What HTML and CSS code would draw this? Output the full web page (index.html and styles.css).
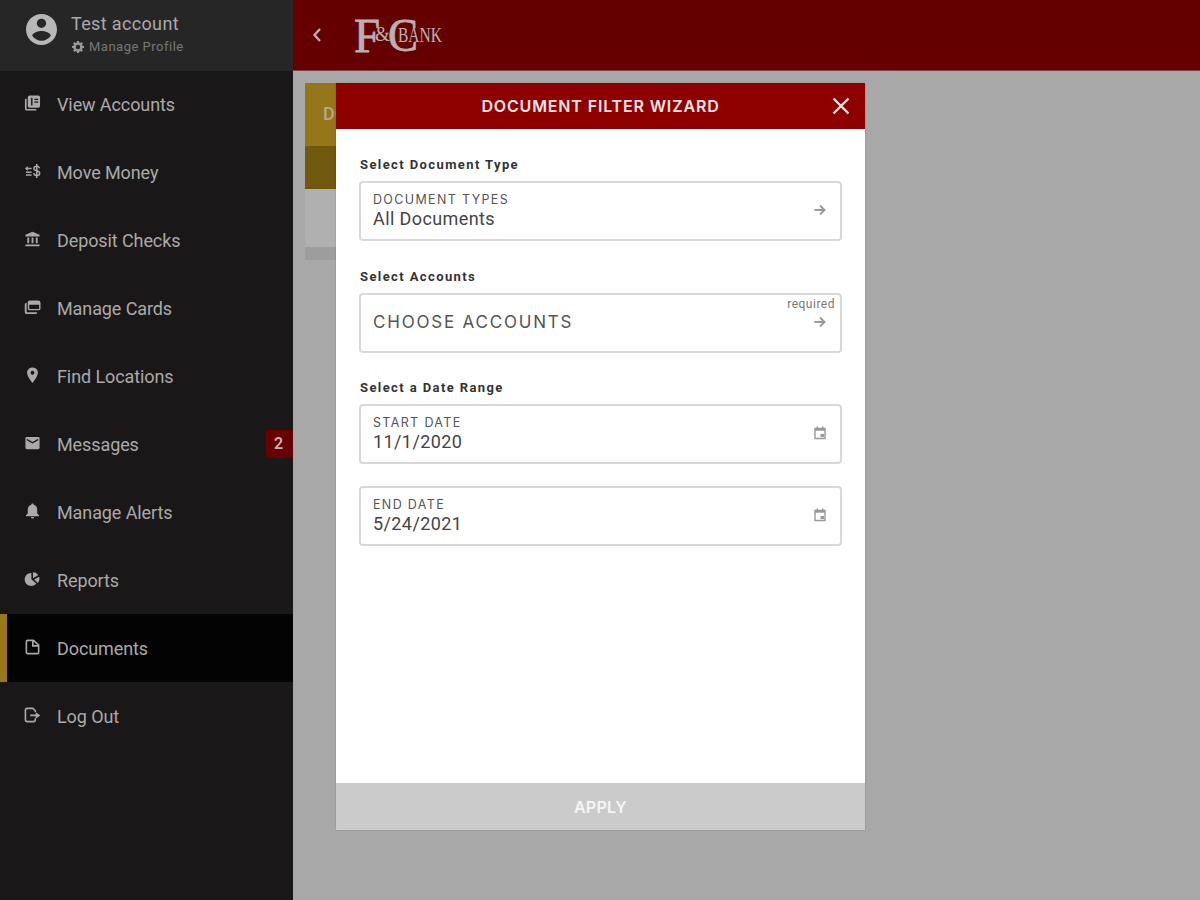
FILE: index.html
```html
<!DOCTYPE html>
<html lang="en">
<head>
    <meta charset="UTF-8">
    <meta name="viewport" content="width=device-width, initial-scale=1.0">
    <title>F&amp;C Bank - Documents</title>
    <link rel="stylesheet" href="styles.css">
</head>
<body>
    <div class="sidebar">
        <div class="profile">
            <svg class="avatar" viewBox="2 2 20 20"><path d="M12 2C6.48 2 2 6.48 2 12s4.48 10 10 10 10-4.48 10-10S17.52 2 12 2zm0 3c1.66 0 3 1.34 3 3s-1.34 3-3 3-3-1.34-3-3 1.34-3 3-3zm0 14.2c-2.5 0-4.71-1.28-6-3.22.03-1.99 4-3.08 6-3.08 1.99 0 5.97 1.09 6 3.08-1.29 1.94-3.5 3.22-6 3.22z"/></svg>
            <div class="profile-text">
                <div class="profile-name">Test account</div>
                <a class="profile-link" href="#">
                    <svg class="gear" viewBox="0 0 12 12"><circle cx="6" cy="6" r="3.5" fill="none" stroke="currentColor" stroke-width="2.6"/><path d="M5 0h2v2H5zM5 10h2v2H5zM0 5h2v2H0zM10 5h2v2h-2zM1.1 2.5l1.4-1.4 1.3 1.3-1.4 1.4zM8.2 2.4l1.3-1.3 1.4 1.4-1.3 1.3zM1.1 9.5l1.3-1.3 1.4 1.4-1.3 1.3zM8.2 9.6l1.4-1.4 1.3 1.3-1.4 1.4z"/></svg>
                    <span>Manage Profile</span>
                </a>
            </div>
        </div>
        <nav class="menu">
            <a class="menu-item" href="#">
                <svg class="icon" viewBox="0 0 18 18"><path fill-rule="evenodd" d="M6 .5h9q2 0 2 2v9q0 2-2 2H6q-2 0-2-2v-9q0-2 2-2zM7.500 3v8H9V3zM11 4v1.300h4V4zM11 7v1.300h4V7z"/><path d="M1 4h1.800v10.800H13v1.700H3q-2 0-2-2z"/></svg>
                <span class="menu-label">View Accounts</span>
            </a>
            <a class="menu-item" href="#">
                <svg class="icon" viewBox="0 0 18 18"><path d="M1 5.800l3-2.600V5h4v1.600H4v1.800zM2 9h6v1.500H2zM2 12h6v1.400H2z"/><path d="M16.500 5.600C16 4 15 3.500 13.500 3.500c-1.800 0-3 .8-3 2.300 0 3.400 6.100 1.500 6.100 5 0 1.500-1.200 2.400-3.100 2.400-1.800 0-3-.8-3.200-2.500M13.500 1v15" fill="none" stroke="currentColor" stroke-width="1.600"/></svg>
                <span class="menu-label">Move Money</span>
            </a>
            <a class="menu-item" href="#">
                <svg class="icon" viewBox="0 0 18 18"><path d="M9 .8L16.500 4v1.800h-15V4zM3.500 7h2v6h-2zM8 7h2v6H8zM12.500 7h2v6h-2zM1.500 14.300h15v1.900h-15z"/></svg>
                <span class="menu-label">Deposit Checks</span>
            </a>
            <a class="menu-item" href="#">
                <svg class="icon" viewBox="0 0 18 18"><path fill-rule="evenodd" d="M6 1.500h9q2.500 0 2.500 2.500v6q0 2-2 2H6q-2 0-2-2V3.500q0-2 2-2zM5.500 6v4.500H16V6z"/><path d="M.8 6q0-2 2-2v10H14q0 2-2 2H2.800q-2 0-2-2z"/></svg>
                <span class="menu-label">Manage Cards</span>
            </a>
            <a class="menu-item" href="#">
                <svg class="icon" viewBox="0 0 18 18"><path fill-rule="evenodd" d="M9 .5c3.300 0 5.700 2.300 5.700 5.500C14.700 10 9 17 9 17S3.300 10 3.300 6C3.300 2.800 5.700.5 9 .5zm0 3.600a2 2 0 100 4 2 2 0 000-4z"/></svg>
                <span class="menu-label">Find Locations</span>
            </a>
            <a class="menu-item" href="#">
                <svg class="icon" viewBox="0 0 18 18"><path fill-rule="evenodd" d="M3 2h12q1.500 0 1.500 1.500v10Q16.500 15 15 15H3q-1.500 0-1.500-1.500v-10Q1.500 2 3 2zm0 2v1.600L9 9l6-3.400V4L9 7.400z"/></svg>
                <span class="menu-label">Messages</span>
                <span class="badge">2</span>
            </a>
            <a class="menu-item" href="#">
                <svg class="icon" viewBox="0 0 18 18"><path d="M9 .5c.8 0 1.300.5 1.300 1.300C12.700 2.500 14 4.300 14 7v4l1.900 2v1H2.100v-1L4 11V7c0-2.700 1.300-4.500 3.700-5.200C7.700 1 8.200.5 9 .5zM7.300 14.800h3.400a1.700 1.700 0 01-3.400 0z"/></svg>
                <span class="menu-label">Manage Alerts</span>
            </a>
            <a class="menu-item" href="#">
                <svg class="icon" viewBox="0 0 18 18"><path d="M7.800 2v6.700l5.200 4.500A6.900 6.900 0 117.800 2zM9.500 1.200c2.500 0 4.400 1.200 5.400 3.200L9.500 7.600zM16 6c.8 2.600.2 5-1.500 6.700L10.800 9z"/></svg>
                <span class="menu-label">Reports</span>
            </a>
            <a class="menu-item active" href="#">
                <svg class="icon" viewBox="0 0 18 18"><path d="M4 1.500h6l5.500 5V14q0 1.500-1.500 1.500H4q-1.500 0-1.500-1.500V3q0-1.500 1.500-1.500zM9.300 2v5.300h6" fill="none" stroke="currentColor" stroke-width="1.700"/></svg>
                <span class="menu-label">Documents</span>
            </a>
            <a class="menu-item" href="#">
                <svg class="icon" viewBox="0 0 18 18"><path d="M12 5.300V4L9.500 1.500h-6Q1.500 1.500 1.500 3.500v10q0 2 2 2h7q1.500 0 1.500-1.700V12M6.500 8.900h8" fill="none" stroke="currentColor" stroke-width="1.700"/><path d="M12.300 5.300l5 3.600-5 3.600z"/></svg>
                <span class="menu-label">Log Out</span>
            </a>
        </nav>
    </div>

    <div class="main">
        <div class="topbar">
            <svg class="back" viewBox="0 0 10 14"><path d="M8 1L2.500 7 8 13" fill="none" stroke="currentColor" stroke-width="2.400"/></svg>
            <svg class="logo" viewBox="-4 -14 100 68">
                <text class="logo-big" x="0" y="36.500" font-size="48" textLength="26" lengthAdjust="spacingAndGlyphs">F</text>
                <text x="21" y="26" font-size="20" textLength="15" lengthAdjust="spacingAndGlyphs">&amp;</text>
                <text class="logo-big" x="34" y="36" font-size="46" textLength="30" lengthAdjust="spacingAndGlyphs">C</text>
                <text x="44" y="27" font-size="20" textLength="44" lengthAdjust="spacingAndGlyphs">BANK</text>
            </svg>
        </div>
        <div class="content">
            <div class="panel">
                <div class="panel-title">DOCUMENTS</div>
                <div class="panel-bar"></div>
                <div class="panel-body"></div>
                <div class="panel-footer"></div>
            </div>
        </div>
    </div>

    <div class="modal">
        <div class="modal-header">
            <span class="modal-title">DOCUMENT FILTER WIZARD</span>
            <svg class="close" viewBox="0 0 18 18"><path d="M1.500 1.500l15 15M16.500 1.500l-15 15" fill="none" stroke="currentColor" stroke-width="2.300"/></svg>
        </div>
        <div class="modal-body">
            <h3>Select Document Type</h3>
            <div class="field">
                <div class="field-text">
                    <div class="field-label">DOCUMENT TYPES</div>
                    <div class="field-value">All Documents</div>
                </div>
                <svg class="field-icon" viewBox="0 0 14 14"><path d="M1.500 7h10M7 2.500L11.500 7 7 11.500" fill="none" stroke="currentColor" stroke-width="1.900"/></svg>
            </div>
            <h3>Select Accounts</h3>
            <div class="field">
                <div class="placeholder">CHOOSE ACCOUNTS</div>
                <span class="required">required</span>
                <svg class="field-icon" viewBox="0 0 14 14"><path d="M1.500 7h10M7 2.500L11.500 7 7 11.500" fill="none" stroke="currentColor" stroke-width="1.900"/></svg>
            </div>
            <h3>Select a Date Range</h3>
            <div class="field">
                <div class="field-text">
                    <div class="field-label">START DATE</div>
                    <div class="field-value date">11/1/2020</div>
                </div>
                <svg class="field-icon" viewBox="0 0 14 14"><path d="M2 2.500h10v10H2zM2 4h10" fill="none" stroke="currentColor" stroke-width="1.400"/><path d="M3.500.5H5V3H3.500zM9 .5h1.500V3H9zM7.500 8H11v3H7.500z"/></svg>
            </div>
            <div class="field">
                <div class="field-text">
                    <div class="field-label">END DATE</div>
                    <div class="field-value date">5/24/2021</div>
                </div>
                <svg class="field-icon" viewBox="0 0 14 14"><path d="M2 2.500h10v10H2zM2 4h10" fill="none" stroke="currentColor" stroke-width="1.400"/><path d="M3.500.5H5V3H3.500zM9 .5h1.500V3H9zM7.500 8H11v3H7.500z"/></svg>
            </div>
        </div>
        <button class="apply" type="button">APPLY</button>
    </div>
</body>
</html>
```
FILE: styles.css
```css
* {
    box-sizing: border-box;
}
body {
    font-family: Roboto, Arial, sans-serif;
    margin: 0;
    height: 900px;
    display: flex;
    overflow: hidden;
    position: relative;
    background-color: #a8a8a8;
}
a {
    color: inherit;
    text-decoration: none;
}
svg {
    fill: currentColor;
    flex-shrink: 0;
}

/* sidebar */
.sidebar {
    width: 293px;
    background-color: #1a1718;
    color: #aaa;
}
.profile {
    height: 71px;
    background-color: #272627;
    display: flex;
    padding: 14px 0 0 26px;
    gap: 14px;
}
.avatar {
    width: 31px;
    height: 31px;
    color: #b8b8b8;
}
.profile-name {
    font-size: 18px;
    line-height: 20px;
    letter-spacing: 0.35px;
}
.profile-link {
    display: flex;
    align-items: center;
    gap: 5px;
    margin-top: 5px;
    padding-left: 1px;
    font-size: 13px;
    line-height: 16px;
    letter-spacing: 0.5px;
    color: #777;
}
.gear {
    width: 12px;
    height: 12px;
    color: #999;
}
.menu {
    margin-top: -1px;
}
.menu-item {
    height: 68px;
    display: flex;
    align-items: center;
    padding-left: 24px;
}
.menu-item.active {
    background-color: #030303;
    border-left: 7px solid #9a7a18;
    padding-left: 17px;
}
.icon {
    width: 17px;
    height: 17px;
    margin-right: 16px;
    margin-bottom: 2px;
}
.menu-label {
    font-size: 18px;
    letter-spacing: -0.1px;
}
.badge {
    margin-left: auto;
    width: 27px;
    height: 28px;
    line-height: 28px;
    padding-right: 2px;
    border-radius: 3px 0 0 3px;
    background-color: #680000;
    color: #c5b5b5;
    text-align: center;
    font-size: 16px;
    font-weight: 600;
}

/* main area */
.main {
    flex: 1;
}
.topbar {
    height: 71px;
    background-color: #640000;
    border-bottom: 1px solid #853c3c;
    display: flex;
    align-items: center;
    padding-left: 19px;
    color: #b9b1b1;
}
.back {
    width: 10px;
    height: 14px;
}
.logo {
    width: 100px;
    height: 68px;
    margin-left: 28px;
    font-family: "Liberation Serif", serif;
}
.logo-big {
    stroke: currentColor;
    stroke-width: 0.8px;
}
.content {
    padding: 12px;
}
.panel {
    width: 540px;
}
.panel-title {
    height: 63px;
    line-height: 61px;
    padding-left: 18px;
    background-color: #957618;
    color: #b5aa8c;
    font-size: 18px;
    font-weight: 500;
}
.panel-bar {
    height: 43px;
    background-color: #70580f;
}
.panel-body {
    height: 58px;
    background-color: #b0b0b0;
}
.panel-footer {
    height: 13px;
    background-color: #9d9d9d;
}

/* filter dialog */
.modal {
    position: absolute;
    left: 336px;
    top: 83px;
    width: 529px;
    height: 747px;
    display: flex;
    flex-direction: column;
    background-color: white;
    box-shadow: 0 0 2px rgba(0,0,0,0.2);
}
.modal-header {
    height: 46px;
    background-color: #8e0000;
    color: #f5e6e6;
    display: grid;
    grid-template-columns: 33px 1fr 33px;
    align-items: center;
}
.modal-title {
    grid-column: 2;
    text-align: center;
    font-family: Inter, sans-serif;
    font-size: 16px;
    font-weight: 600;
    letter-spacing: 0.85px;
    white-space: nowrap;
}
.close {
    width: 18px;
    height: 18px;
}
.modal-body {
    flex: 1;
    padding: 27px 23px 0;
}
h3 {
    margin: 0 0 8px 1px;
    font-family: Roboto, sans-serif;
    font-size: 13px;
    line-height: 17px;
    font-weight: 700;
    letter-spacing: 1.4px;
    color: #333;
}
.field {
    position: relative;
    height: 60px;
    margin-bottom: 22px;
    border: 2px solid #d8d8d8;
    border-radius: 4px;
    display: flex;
    align-items: center;
    padding: 0 13px 2px 12px;
    color: #555;
}
.field + h3 {
    margin-top: 26.5px;
}
.field-text,
.placeholder {
    flex: 1;
}
.field-label {
    font-family: Inter, sans-serif;
    font-size: 12.5px;
    line-height: 17px;
    letter-spacing: 1.35px;
}
.field-value {
    font-size: 18px;
    line-height: 21px;
    letter-spacing: 0.4px;
    color: #444;
}
.placeholder {
    font-family: Inter, sans-serif;
    font-size: 17px;
    letter-spacing: 1.8px;
}
.required {
    position: absolute;
    top: 1px;
    right: 5px;
    font-size: 12px;
    line-height: 16px;
    letter-spacing: 0.5px;
    color: #777;
}
.field-icon {
    width: 14px;
    height: 14px;
    color: #999;
}
.apply {
    height: 47px;
    border: none;
    background-color: #cbcbcb;
    color: #f6f6f6;
    font-family: Inter, sans-serif;
    font-size: 16px;
    font-weight: 600;
    letter-spacing: 0.3px;
}
```
